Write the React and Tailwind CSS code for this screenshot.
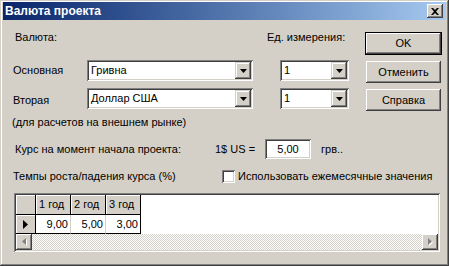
import React from "react";

const sunken =
  "shadow-[inset_1px_1px_#808080,inset_-1px_-1px_#ffffff,inset_2px_2px_#404040,inset_-2px_-2px_#d4d0c8]";
const raised =
  "shadow-[inset_-1px_-1px_#404040,inset_1px_1px_#ffffff,inset_-2px_-2px_#808080,inset_2px_2px_#d4d0c8]";

function DownTri() {
  return (
    <svg width="7" height="4" viewBox="0 0 7 4">
      <path d="M0 0h7L3.5 4z" fill="#000" />
    </svg>
  );
}

function DropBtn() {
  return (
    <div className="w-[16px] h-[17px] bg-[#d4d0c8] flex items-center justify-center shadow-[inset_-1px_-1px_#404040,inset_1px_1px_#d4d0c8,inset_-2px_-2px_#808080,inset_2px_2px_#ffffff]">
      <DownTri />
    </div>
  );
}

function Combo({ className, text }) {
  return (
    <div className={`${className} h-[21px] bg-white flex items-center p-[2px] ${sunken}`}>
      <span className="flex-1 pl-[2px] leading-[13px] whitespace-nowrap">{text}</span>
      <DropBtn />
    </div>
  );
}

function Btn({ children, className }) {
  return (
    <div className={`${className} bg-[#d4d0c8] flex items-center justify-center ${raised}`}>
      <span className="leading-[13px]">{children}</span>
    </div>
  );
}

function ScrollArrow({ dir }) {
  return (
    <div className={`w-[16px] h-[16px] bg-[#d4d0c8] flex items-center justify-center ${raised}`}>
      <svg width="5" height="8" viewBox="0 0 5 8">
        {dir === "left" ? (
          <>
            <path d="M5 1L1 4.5 5 8z" fill="#ffffff" />
            <path d="M4 0L0 3.5 4 7z" fill="#808080" />
          </>
        ) : (
          <>
            <path d="M1 1l4 3.5L1 8z" fill="#ffffff" />
            <path d="M0 0l4 3.5L0 7z" fill="#808080" />
          </>
        )}
      </svg>
    </div>
  );
}

export default function App() {
  return (
    <div className="w-[449px] h-[266px] bg-[#d4d0c8] pt-[2px] px-[3px] pb-[3px] flex flex-col text-[11px] text-black font-['Liberation_Sans',Arial,sans-serif] shadow-[inset_-1px_-1px_#404040,inset_1px_1px_#d4d0c8,inset_-2px_-2px_#808080,inset_2px_2px_#ffffff] overflow-hidden">
      {/* Title bar */}
      <div className="h-[18px] shrink-0 flex items-center justify-between pl-[2px] pr-[3px] bg-linear-to-r from-[#0a246a] to-[#a6caf0]">
        <span className="text-white font-bold text-[12px] leading-[14px]">Валюта проекта</span>
        <div className={`w-[16px] h-[14px] bg-[#d4d0c8] flex items-center justify-center ${raised}`}>
          <svg width="8" height="7" viewBox="0 0 8 7">
            <path d="M0 0h2l2 2 2-2h2L5 3.5 8 7H6L4 5 2 7H0l3-3.5z" fill="#000" />
          </svg>
        </div>
      </div>

      {/* Top section */}
      <div className="flex">
        <div className="w-[362px] flex flex-col">
          <div className="mt-[11px] h-[13px] flex leading-[13px]">
            <span className="ml-[12px] w-[252px]">Валюта:</span>
            <span>Ед. измерения:</span>
          </div>
          <div className="mt-[16px] h-[21px] flex items-center">
            <span className="ml-[10px] w-[74px] leading-[13px]">Основная</span>
            <Combo className="w-[166px]" text="Гривна" />
            <Combo className="ml-[27px] w-[69px]" text="1" />
          </div>
          <div className="mt-[7px] h-[21px] flex items-center">
            <span className="ml-[10px] w-[74px] leading-[13px] pt-[3px]">Вторая</span>
            <Combo className="w-[166px]" text="Доллар США" />
            <Combo className="ml-[27px] w-[69px]" text="1" />
          </div>
          <div className="mt-[7px] h-[13px] leading-[13px] ml-[9px]">(для расчетов на внешнем рынке)</div>
        </div>
        <div className="flex flex-col">
          <div className="mt-[12px] w-[77px] h-[23px] border border-black">
            <Btn className="w-full h-full">OK</Btn>
          </div>
          <Btn className="mt-[6px] ml-[1px] w-[75px] h-[22px]">Отменить</Btn>
          <Btn className="mt-[6px] ml-[1px] w-[75px] h-[22px]">Справка</Btn>
        </div>
      </div>

      {/* Rate row */}
      <div className="mt-[10px] h-[20px] flex items-center">
        <span className="ml-[12px] w-[200px] leading-[13px]">Курс на момент начала проекта:</span>
        <span className="w-[50px] leading-[13px]">1$ US =</span>
        <div className={`w-[46px] h-[20px] bg-white flex items-center justify-center ${sunken}`}>
          <span className="leading-[13px]">5,00</span>
        </div>
        <span className="ml-[10px] leading-[13px]">грв..</span>
      </div>

      {/* Growth row */}
      <div className="mt-[10px] h-[14px] flex items-center">
        <span className="ml-[10px] w-[209px] leading-[13px]">Темпы роста/падения курса (%)</span>
        <div className={`w-[13px] h-[13px] bg-white ${sunken}`} />
        <span className="ml-[3px] leading-[13px]">Использовать ежемесячные значения</span>
      </div>

      {/* Grid */}
      <div className={`mt-[10px] ml-[11px] w-[426px] h-[59px] bg-white p-[2px] flex flex-col ${sunken}`}>
        <div className="flex h-[20px]">
          <div className="w-[20px] h-[20px] bg-[#d4d0c8] border-r border-b border-black shadow-[inset_1px_1px_#ffffff]" />
          {["1 год", "2 год", "3 год"].map((t) => (
            <div
              key={t}
              className="w-[35px] h-[20px] bg-[#d4d0c8] border-r border-b border-black shadow-[inset_1px_1px_#ffffff] flex items-center pl-[3px]"
            >
              <span className="leading-[13px] whitespace-nowrap">{t}</span>
            </div>
          ))}
        </div>
        <div className="flex h-[19px]">
          <div className="w-[20px] h-[19px] bg-[#d4d0c8] border-r border-b border-black shadow-[inset_1px_1px_#ffffff] flex items-center justify-center">
            <svg width="5" height="9" viewBox="0 0 5 9">
              <path d="M0 0l5 4.5L0 9z" fill="#000" />
            </svg>
          </div>
          <div className="w-[35px] h-[19px] border-r border-r-[#d4d0c8] border-b border-b-black flex items-center justify-end pr-[2px]">
            <span className="leading-[13px]">9,00</span>
          </div>
          <div className="w-[35px] h-[19px] border-r border-r-[#d4d0c8] border-b border-b-black flex items-center justify-end pr-[2px]">
            <span className="leading-[13px]">5,00</span>
          </div>
          <div className="w-[35px] h-[19px] border-r border-b border-black flex items-center justify-end pr-[2px]">
            <span className="leading-[13px]">3,00</span>
          </div>
        </div>
        <div className="flex h-[16px] mt-auto">
          <ScrollArrow dir="left" />
          <div className="flex-1 h-[16px] bg-[image:repeating-conic-gradient(#ffffff_0_25%,#d4d0c8_0_50%)] bg-[length:2px_2px]" />
          <ScrollArrow dir="right" />
        </div>
      </div>
    </div>
  );
}
